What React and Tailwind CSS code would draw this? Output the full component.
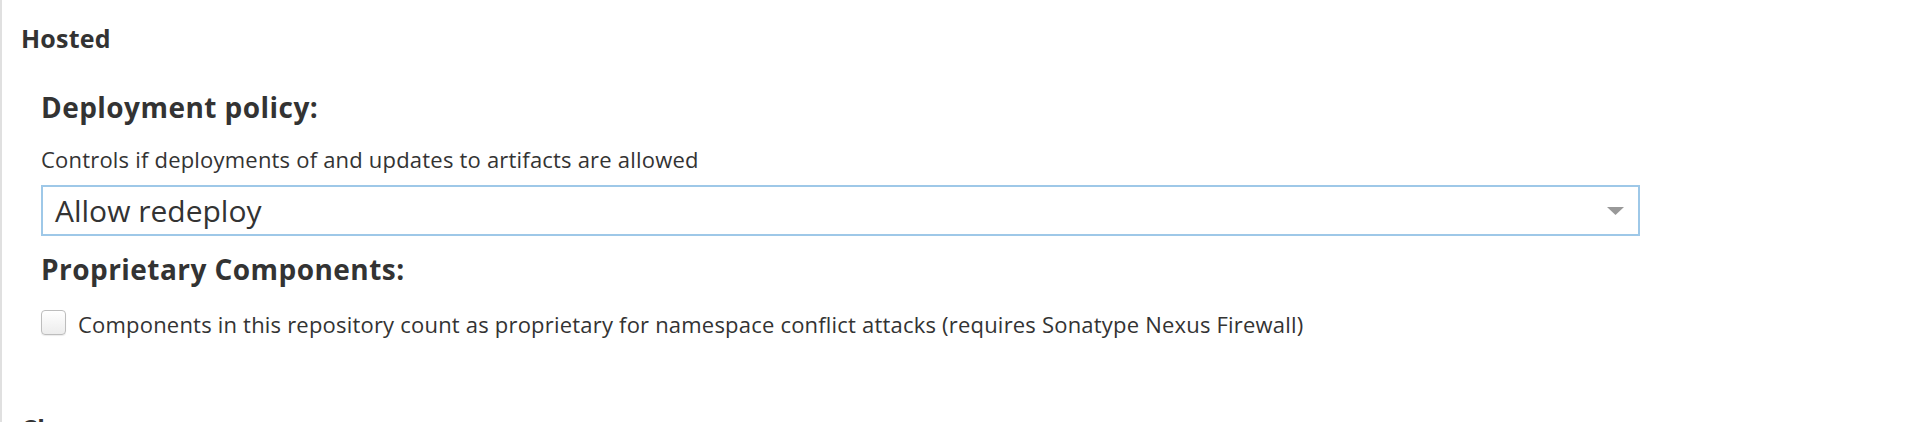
export default function App() {
  return (
    <div
      className="h-[422px] overflow-hidden bg-white border-l-2 border-[#e0e0e0] pl-[19px] pt-[23px] text-[#333]"
      style={{ fontFamily: '"Open Sans", "Liberation Sans", sans-serif' }}
    >
      <h2 className="text-[25px] leading-[30px] font-bold tracking-[0.2px]">Hosted</h2>

      <div className="pl-5">
        <h3 className="mt-[37px] text-[28px] leading-[34px] font-bold tracking-[0.45px]">Deployment policy:</h3>
        <p className="mt-[21px] text-[22px] leading-[28px] tracking-[0.2px]">
          Controls if deployments of and updates to artifacts are allowed
        </p>
        <div className="mt-[12px] w-[1599px] h-[51px] border-2 border-[#9ec8e8] flex items-center justify-between pl-[12px] pr-[14px]">
          <span className="text-[30px] leading-none">Allow redeploy</span>
          <svg width="17" height="8" viewBox="0 0 17 8">
            <path d="M0 0h17L8.5 8z" fill="#999" />
          </svg>
        </div>

        <h3 className="mt-[16px] text-[28px] leading-[34px] font-bold tracking-[0.45px]">Proprietary Components:</h3>
        <label className="mt-[24px] flex items-start gap-3">
          <span className="w-[25px] h-[25px] shrink-0 rounded-[4px] border border-[#bdbdbd] bg-gradient-to-b from-white to-[#ececec] shadow-[0_1px_1px_rgba(0,0,0,0.08)]" />
          <span className="text-[22px] leading-[28px] tracking-[0.2px]">
            Components in this repository count as proprietary for namespace conflict attacks (requires Sonatype Nexus Firewall)
          </span>
        </label>
      </div>

      <h2 className="mt-[75px] text-[25px] leading-[30px] font-bold tracking-[0.2px]">Cleanup</h2>
    </div>
  )
}
